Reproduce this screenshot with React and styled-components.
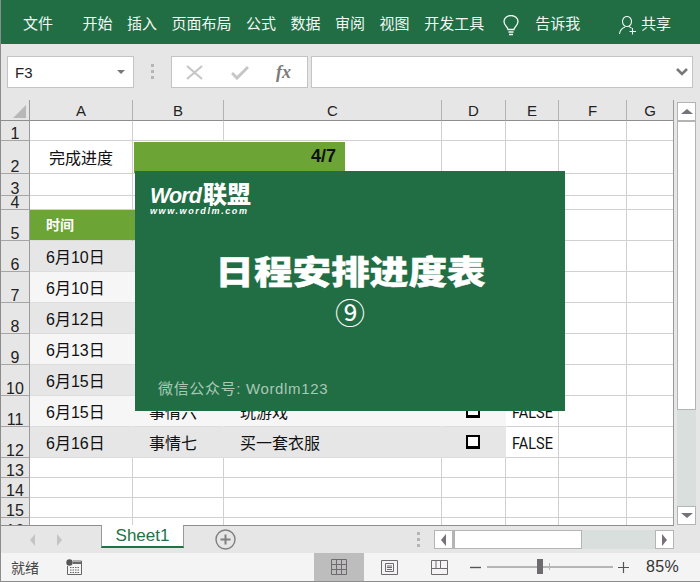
import React from 'react';
import styled, { createGlobalStyle } from 'styled-components';

const Global = createGlobalStyle`
  html, body { margin: 0; padding: 0; background: #fff; }
  * { box-sizing: border-box; }
`;

const SANS = `"Liberation Sans", "Noto Sans CJK SC", sans-serif`;

const Window = styled.div`
  position: relative;
  width: 700px;
  height: 582px;
  display: flex;
  flex-direction: column;
  overflow: hidden;
  background: #e6e6e6;
  border-left: 1px solid #8c8c8c;
  font-family: ${SANS};
  color: #111;
`;

/* ribbon */
const Ribbon = styled.header`
  height: 44px;
  flex: none;
  margin-left: -1px;
  background: #216e45;
  color: #f3f7f4;
  display: flex;
  align-items: center;
  padding: 0 29px 0 23px;
  font-size: 15px;
`;
const Tabs = styled.nav`
  display: flex;
  align-items: center;
  gap: 14.5px;
`;
const Tab = styled.span`
  white-space: nowrap;
  margin-right: ${p => p.$after || 0}px;
`;
const Tell = styled.div`
  display: flex;
  align-items: center;
  gap: 16px;
  margin-left: 19px;
  svg { margin-top: 6px; }
`;
const Share = styled.div`
  display: flex;
  align-items: center;
  gap: 4px;
  margin-left: auto;
  svg { margin-top: 7px; }
`;

/* formula bar */
const FormulaBar = styled.div`
  height: 56px;
  flex: none;
  display: flex;
  align-items: flex-start;
  padding: 12px 7px 0 6px;
`;
const NameBox = styled.div`
  width: 127px;
  height: 32px;
  background: #fff;
  border: 1px solid #c4c4c4;
  display: flex;
  align-items: center;
  justify-content: space-between;
  padding: 0 8px 0 7px;
  font-size: 15px;
  color: #222;
`;
const Caret = styled.i`
  width: 0;
  height: 0;
  border-left: 4px solid transparent;
  border-right: 4px solid transparent;
  border-top: 4px solid #777;
`;
const Grip = styled.div`
  display: flex;
  flex-direction: column;
  gap: 3px;
  margin: ${p => p.$margin};
  span { width: 3px; height: 3px; background: #b5b5b5; display: block; }
`;
const FxBox = styled.div`
  width: 137px;
  height: 32px;
  background: #fff;
  border: 1px solid #c4c4c4;
  display: flex;
  align-items: center;
  padding-left: 14px;
  gap: 28px;
  margin-right: 3px;
`;
const Fx = styled.span`
  font-family: "Liberation Serif", serif;
  font-style: italic;
  font-weight: 700;
  font-size: 18px;
  color: #7b7b7b;
  margin-left: -1px;
`;
const FormulaInput = styled.div`
  flex: 1;
  height: 32px;
  background: #fff;
  border: 1px solid #c4c4c4;
  display: flex;
  align-items: center;
  justify-content: flex-end;
  padding-right: 3px;
`;

/* sheet */
const SheetArea = styled.div`
  height: 425px;
  flex: none;
  display: flex;
`;
const Grid = styled.div`
  width: 673px;
  height: 425px;
  overflow: hidden;
  display: grid;
  grid-template-columns: 29px 103px 91px 218px 64px 53px 68px 47px;
  grid-auto-rows: min-content;
  border-right: 1px solid #9a9a9a;
  align-content: start;
`;
const ColHead = styled.div`
  height: 21px;
  border-right: 1px solid #b2b2b2;
  border-bottom: 1px solid #8e8e8e;
  background: #e6e6e6;
  display: flex;
  align-items: center;
  justify-content: center;
  font-size: 15px;
  color: #222;
  &:last-of-type { border-right: none; }
`;
const Corner = styled(ColHead)`
  align-items: flex-end;
  justify-content: flex-end;
  padding: 0 3px 2px 0;
  border-right-color: #9a9a9a;
`;
const CornerMark = styled.i`
  width: 0;
  height: 0;
  border-left: 13px solid transparent;
  border-bottom: 13px solid #b8b8b8;
`;
const RowHead = styled.div`
  height: ${p => p.$h}px;
  border-right: 1px solid #9a9a9a;
  border-bottom: 1px solid #a6a6a6;
  background: #e6e6e6;
  display: flex;
  align-items: flex-end;
  justify-content: center;
  font-size: 16px;
  line-height: 12px;
  color: #222;
  overflow: hidden;
`;
const Cell = styled.div`
  height: ${p => p.$h}px;
  grid-column: span ${p => p.$span || 1};
  background: ${p => p.$bg || '#fff'};
  border-right: 1px solid ${p => p.$bg ? 'transparent' : '#d0d0d0'};
  border-bottom: 1px solid ${p => p.$bg ? '#dddddd' : '#d0d0d0'};
  display: flex;
  align-items: ${p => p.$top ? 'flex-start' : 'center'};
  justify-content: ${p => p.$align || 'flex-start'};
  padding-left: ${p => p.$pad ?? 16}px;
  padding-bottom: ${p => p.$padBottom || 0}px;
  font-size: ${p => p.$size || 16}px;
  color: ${p => p.$color || '#111'};
  font-weight: ${p => p.$weight || 400};
  white-space: nowrap;
  overflow: hidden;
`;
const BoolText = styled.span`
  display: inline-block;
  font-family: Roboto, sans-serif;
  font-size: 14.5px;
  padding-top: 2px;
  transform: scaleY(1.14);
`;
const Progress = styled.div`
  width: 211px;
  height: 31px;
  margin-top: 1px;
  background: #6ca535;
  display: flex;
  align-items: center;
  justify-content: flex-end;
  padding: 0 9px 2px 0;
  font-weight: 700;
  font-size: 18px;
`;
const Check = styled.i`
  width: 14px;
  height: 14px;
  display: block;
  margin-left: 24px;
  background: #fff;
  border: 2px solid #000;
  border-bottom-width: 3px;
`;

/* scrollbars */
const VScroll = styled.aside`
  flex: 1;
  display: flex;
  flex-direction: column;
  padding: 2px 4px 0 3px;
`;
const ScrollBtn = styled.div`
  flex: none;
  width: 19px;
  height: 19px;
  background: #fff;
  border: 1px solid #b4b4b4;
  display: flex;
  align-items: center;
  justify-content: center;
`;
const Tri = styled.i`
  width: 0;
  height: 0;
  border-style: solid;
  border-color: transparent;
  ${p => p.$dir === 'up' && `border-width: 0 6px 5px; border-bottom-color: #76717a;`}
  ${p => p.$dir === 'down' && `border-width: 5px 6px 0; border-top-color: #76717a;`}
  ${p => p.$dir === 'left' && `border-width: 6px 5px 6px 0; border-right-color: ${p.$color || '#76717a'};`}
  ${p => p.$dir === 'right' && `border-width: 6px 0 6px 5px; border-left-color: ${p.$color || '#76717a'};`}
`;
const VTrack = styled.div`
  flex: 1;
  background: #d8dfdd;
`;
const VThumb = styled.div`
  height: 289px;
  background: #fff;
  border: 1px solid #b4b4b4;
`;

/* sheet tabs */
const SheetBar = styled.div`
  height: 28px;
  flex: none;
  display: flex;
  align-items: flex-start;
  border-top: 1px solid #8e8e8e;
  margin-right: 26px;
  background: #e6e6e6;
`;
const SheetNav = styled.div`
  width: 100px;
  height: 27px;
  display: flex;
  align-items: center;
  gap: 22px;
  padding-left: 29px;
`;
const SheetTab = styled.div`
  width: 83px;
  height: 23px;
  background: #fff;
  border-left: 1px solid #9a9a9a;
  border-right: 1px solid #9a9a9a;
  border-bottom: 2px solid #217346;
  color: #217346;
  font-size: 17px;
  display: flex;
  align-items: center;
  justify-content: center;
  margin-top: -1px;
`;
const AddBtn = styled.div`
  margin: 3px 0 0 31px;
  width: 21px;
  height: 21px;
  display: flex;
`;
const HScroll = styled.div`
  display: flex;
  margin: 4px 0 0 auto;
  width: 240px;
  height: 19px;
  align-items: stretch;
`;
const HThumb = styled.div`
  width: 129px;
  background: #fff;
  border: 1px solid #b4b4b4;
  border-left-width: 2px;
`;
const HTrack = styled.div`
  flex: 1;
  background: #d8dfdd;
`;

/* status bar */
const StatusBar = styled.footer`
  height: 29px;
  flex: none;
  display: flex;
  align-items: center;
  background: #f4f4f4;
  border-bottom: 1px solid #8c8c8c;
  font-size: 14px;
  color: #444;
  padding-left: 10px;
`;
const Ready = styled.span`
  width: 55px;
`;
const ViewBtn = styled.div`
  width: 50px;
  height: 28px;
  background: ${p => p.$active ? '#bdbdbd' : 'transparent'};
  display: flex;
  align-items: center;
  justify-content: center;
`;
const Spacer = styled.div`
  flex: 1;
`;
const Zoom = styled.div`
  display: flex;
  align-items: center;
  width: 230px;
  margin-left: 6px;
  gap: 5px;
`;
const Slider = styled.div`
  position: relative;
  width: 126px;
  height: 2px;
  background: #b5b5b5;
`;
const SliderThumb = styled.i`
  position: absolute;
  left: 50px;
  top: -7px;
  width: 6px;
  height: 15px;
  background: #6f6a70;
`;
const SliderTick = styled.i`
  position: absolute;
  left: 62px;
  top: -3px;
  width: 1px;
  height: 7px;
  background: #b5b5b5;
`;
const Percent = styled.span`
  font-size: 16px;
  color: #333;
  margin-left: 12px;
  letter-spacing: 0.3px;
`;

/* overlay card */
const Card = styled.section`
  position: absolute;
  left: 134px;
  top: 171px;
  width: 430px;
  height: 240px;
  background: #216e45;
  color: #fff;
  display: flex;
  flex-direction: column;
  padding: 12px 15px 0;
`;
const Logo = styled.div`
  display: flex;
  flex-direction: column;
  align-self: flex-start;
`;
const LogoMain = styled.div`
  display: flex;
  align-items: baseline;
  height: 23px;
  line-height: 23px;
`;
const LogoWord = styled.span`
  font: italic 700 21.5px/23px ${SANS};
  letter-spacing: -0.9px;
`;
const LogoCn = styled.span`
  font-size: 24px;
  line-height: 23px;
  font-weight: 900;
  margin-left: 2px;
`;
const LogoUrl = styled.span`
  font: italic 700 9px/11px ${SANS};
  letter-spacing: 1.6px;
  white-space: nowrap;
`;
const Title = styled.h1`
  margin: 36px 0 0;
  align-self: center;
  font-size: 33px;
  line-height: 40px;
  font-weight: 900;
  white-space: nowrap;
  transform: scaleX(1.17);
  -webkit-text-stroke: 0.4px #fff;
`;
const Number = styled.div`
  align-self: center;
  font-size: 30px;
  line-height: 36px;
  margin-top: 3px;
  font-weight: 400;
`;
const WeChat = styled.div`
  margin: 47px 0 0 8px;
  font-size: 15px;
  line-height: 20px;
  color: #a9c7b5;
  letter-spacing: 0.65px;
  white-space: nowrap;
`;

const rows = [
  [1, 20], [2, 33], [3, 22], [4, 14], [5, 31], [6, 31], [7, 31], [8, 31], [9, 31], [10, 31], [11, 31], [12, 31], [13, 20], [14, 20], [15, 20], [16, 20],
];
const GREY = '#e6e6e6';
const LIGHT = '#f6f6f6';
const dates = { 6: ['6月10日', GREY], 7: ['6月10日', LIGHT], 8: ['6月12日', GREY], 9: ['6月13日', LIGHT], 10: ['6月15日', GREY], 11: ['6月15日', LIGHT], 12: ['6月16日', GREY] };
const tasks = { 11: ['事情六', '玩游戏'], 12: ['事情七', '买一套衣服'] };

function Blank({ h, n }) {
  return Array.from({ length: n }, (_, i) => <Cell key={i} $h={h} />);
}

function SheetRow({ n, h }) {
  if (n === 2) {
    return (
      <>
        <Cell $h={h} $align="center" $pad={0}>完成进度</Cell>
        <Cell $h={h} $span={2} $pad={1} $top><Progress>4/7</Progress></Cell>
        <Blank h={h} n={4} />
      </>
    );
  }
  if (n === 5) {
    const G = '#6ca535';
    return (
      <>
        <Cell $h={h} $bg={G} $color="#fff" $size={14} $weight={700} $padBottom={2}>时间</Cell>
        <Cell $h={h} $bg={G} />
        <Cell $h={h} $bg={G} />
        <Cell $h={h} $bg={G} />
        <Blank h={h} n={3} />
      </>
    );
  }
  if (dates[n]) {
    const [d, bg] = dates[n];
    const t = tasks[n];
    return (
      <>
        <Cell $h={h} $bg={bg}>{d}</Cell>
        <Cell $h={h} $bg={bg}>{t && t[0]}</Cell>
        <Cell $h={h} $bg={bg}>{t && t[1]}</Cell>
        <Cell $h={h} $bg={bg} $pad={0}>{t && <Check />}</Cell>
        <Cell $h={h} $pad={6}>{t && <BoolText>FALSE</BoolText>}</Cell>
        <Blank h={h} n={2} />
      </>
    );
  }
  return <Blank h={h} n={7} />;
}

const Dots = ({ margin }) => (
  <Grip $margin={margin}><span /><span /><span /></Grip>
);

export default function App() {
  return (
    <Window>
      <Global />
      <Ribbon>
        <Tabs>
          <Tab $after={15}>文件</Tab>
          {['开始', '插入', '页面布局', '公式', '数据', '审阅', '视图', '开发工具'].map(t => <Tab key={t}>{t}</Tab>)}
        </Tabs>
        <Tell>
          <svg width="16" height="21" viewBox="0 0 16 21" fill="none" stroke="#f3f7f4" strokeWidth="1.3">
            <path d="M5 14.5c0-2.5-4-4-4-8a7 6 0 0 1 14 0c0 4-4 5.500-4 8z" />
            <path d="M5.500 17h5M6 19.500h4" />
          </svg>
          <Tab>告诉我</Tab>
        </Tell>
        <Share>
          <svg width="18" height="19" viewBox="0 0 18 19" fill="none" stroke="#f3f7f4" strokeWidth="1.1">
            <ellipse cx="8" cy="5.500" rx="4.500" ry="5" />
            <path d="M0.500 18c0.500-4 3-6 5.500-7M10 10.500c1 .4 2 1 2.500 1.800" />
            <path d="M13.500 12v6.500M10.500 15.500h6.500" />
          </svg>
          <Tab>共享</Tab>
        </Share>
      </Ribbon>

      <FormulaBar>
        <NameBox>F3<Caret /></NameBox>
        <Dots margin="8px 17px 0 17px" />
        <FxBox>
          <svg width="17" height="15" viewBox="0 0 17 15" stroke="#c6c6c6" strokeWidth="2.200" fill="none">
            <path d="M1 1l15 13M16 1L1 14" />
          </svg>
          <svg width="18" height="15" viewBox="0 0 18 15" stroke="#c6c6c6" strokeWidth="3" fill="none">
            <path d="M1 8l5 5L17 2" />
          </svg>
          <Fx>fx</Fx>
        </FxBox>
        <FormulaInput>
          <svg width="14" height="10" viewBox="0 0 14 10" fill="none" stroke="#777" strokeWidth="2.500">
            <path d="M2 2l5 5 5-5" />
          </svg>
        </FormulaInput>
      </FormulaBar>

      <SheetArea>
        <Grid>
          <Corner><CornerMark /></Corner>
          {['A', 'B', 'C', 'D', 'E', 'F', 'G'].map(c => <ColHead key={c}>{c}</ColHead>)}
          {rows.map(([n, h]) => (
            <React.Fragment key={n}>
              <RowHead $h={h}>{n}</RowHead>
              <SheetRow n={n} h={h} />
            </React.Fragment>
          ))}
        </Grid>
        <VScroll>
          <ScrollBtn><Tri $dir="up" /></ScrollBtn>
          <VThumb />
          <VTrack />
          <ScrollBtn><Tri $dir="down" /></ScrollBtn>
        </VScroll>
      </SheetArea>

      <SheetBar>
        <SheetNav>
          <Tri $dir="left" $color="#c4c4c4" />
          <Tri $dir="right" $color="#c4c4c4" />
        </SheetNav>
        <SheetTab>Sheet1</SheetTab>
        <AddBtn>
          <svg width="21" height="21" viewBox="0 0 21 21" fill="none" stroke="#7f7f7f">
            <circle cx="10.500" cy="10.500" r="9.500" strokeWidth="1.400" />
            <path d="M10.500 5.500v10M5.500 10.500h10" strokeWidth="2" />
          </svg>
        </AddBtn>
        <Dots margin="6px 0 0 181px" />
        <HScroll>
          <ScrollBtn><Tri $dir="left" /></ScrollBtn>
          <HThumb />
          <HTrack />
          <ScrollBtn><Tri $dir="right" /></ScrollBtn>
        </HScroll>
      </SheetBar>

      <StatusBar>
        <Ready>就绪</Ready>
        <svg width="16" height="16" viewBox="0 0 16 16" fill="none">
          <circle cx="3.500" cy="3.500" r="3.200" fill="#555" />
          <path d="M7 2h8.500v13.500H1.500V7" stroke="#666" />
          <path d="M7 3h8v2H7z" fill="#666" />
          <path d="M4 8.500h9M4 11h9M4 13.500h9" stroke="#666" strokeDasharray="1.500 1" />
        </svg>
        <Spacer />
        <ViewBtn $active>
          <svg width="16" height="16" viewBox="0 0 16 16" fill="none" stroke="#6f6a70">
            <path d="M.5.500h15v15H.5zM5.500.500v15M10.500.500v15M.5 5.500h15M.5 10.500h15" />
          </svg>
        </ViewBtn>
        <ViewBtn>
          <svg width="17" height="15" viewBox="0 0 17 15" fill="none" stroke="#6f6a70">
            <path d="M.5.500h16v14H.5zM4.500 3.500h8v8h-8zM6 6h5M6 7.500h5M6 9.500h5" />
          </svg>
        </ViewBtn>
        <ViewBtn>
          <svg width="17" height="15" viewBox="0 0 17 15" fill="none" stroke="#6f6a70">
            <path d="M.5.500h16v14H.5zM.5 8.500h9v-8M9.500 8.500h7M5 .500v8" />
          </svg>
        </ViewBtn>
        <Zoom>
          <svg width="12" height="3" viewBox="0 0 12 3"><path d="M0 1.500h11" stroke="#555" strokeWidth="1.400" /></svg>
          <Slider><SliderThumb /><SliderTick /></Slider>
          <svg width="11" height="11" viewBox="0 0 11 11"><path d="M0 5.500h11M5.500 0v11" stroke="#555" strokeWidth="1.200" /></svg>
          <Percent>85%</Percent>
        </Zoom>
      </StatusBar>

      <Card>
        <Logo>
          <LogoMain><LogoWord>Word</LogoWord><LogoCn>联盟</LogoCn></LogoMain>
          <LogoUrl>www.wordlm.com</LogoUrl>
        </Logo>
        <Title>日程安排进度表</Title>
        <Number>⑨</Number>
        <WeChat>微信公众号: Wordlm123</WeChat>
      </Card>
    </Window>
  );
}
